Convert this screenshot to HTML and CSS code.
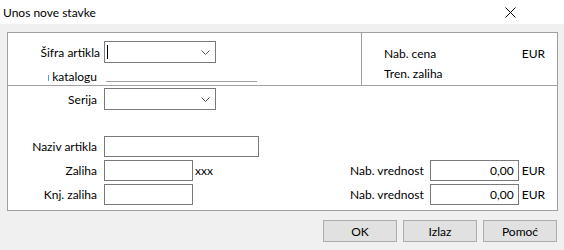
FILE: index.html
```html
<!DOCTYPE html>
<html lang="sr">
<head>
    <meta charset="UTF-8">
    <title>Unos nove stavke</title>
    <link rel="stylesheet" href="styles.css">
</head>
<body>
    <div class="titlebar">
        <span class="title">Unos nove stavke</span>
        <svg class="close" width="11" height="11" viewBox="0 0 11 11">
            <path d="M0.5 0.5 L10.5 10.5 M10.5 0.5 L0.5 10.5" stroke="#000" stroke-width="1" fill="none"/>
        </svg>
    </div>
    <div class="content">
        <div class="frame">
            <div class="top">
                <div class="top-left">
                    <div class="row r-sifra">
                        <label class="lbl lbl-first">Šifra artikla</label>
                        <div class="combo">
                            <span class="caret"></span>
                            <svg class="chev" width="9" height="5" viewBox="0 0 9 5"><polyline points="0.5,0.5 4.5,4.5 8.5,0.5" stroke="#555" fill="none"/></svg>
                        </div>
                    </div>
                    <div class="row r-cat">
                        <div class="clip"><span>Šifra u katalogu</span></div>
                        <div class="cat-line"></div>
                    </div>
                </div>
                <div class="top-right">
                    <div class="info-row"><span>Nab. cena</span><span>EUR</span></div>
                    <div class="info-row"><span>Tren. zaliha</span></div>
                </div>
            </div>
            <div class="bottom">
                <div class="row r-serija">
                    <label class="lbl">Serija</label>
                    <div class="combo">
                        <svg class="chev" width="9" height="5" viewBox="0 0 9 5"><polyline points="0.5,0.5 4.5,4.5 8.5,0.5" stroke="#555" fill="none"/></svg>
                    </div>
                </div>
                <div class="row r-naziv">
                    <label class="lbl">Naziv artikla</label>
                    <input class="field f-wide" type="text">
                </div>
                <div class="row r-qty">
                    <label class="lbl">Zaliha</label>
                    <input class="field f-short" type="text">
                    <span class="unit">xxx</span>
                    <div class="right-group">
                        <label>Nab. vrednost</label>
                        <input class="field f-num" type="text" value="0,00">
                        <span>EUR</span>
                    </div>
                </div>
                <div class="row r-qty">
                    <label class="lbl">Knj. zaliha</label>
                    <input class="field f-short" type="text">
                    <div class="right-group">
                        <label>Nab. vrednost</label>
                        <input class="field f-num" type="text" value="0,00">
                        <span>EUR</span>
                    </div>
                </div>
            </div>
        </div>
        <div class="buttons">
            <button class="btn">OK</button>
            <button class="btn">Izlaz</button>
            <button class="btn">Pomoć</button>
        </div>
    </div>
</body>
</html>
```

FILE: styles.css
```css
body {
    margin: 0;
    width: 564px;
    height: 250px;
    overflow: hidden;
    background-color: #f0f0f0;
    font-family: Lato, "Noto Sans", sans-serif;
    font-size: 12px;
    color: #000;
}
.titlebar {
    height: 24px;
    background-color: #fff;
    display: flex;
    align-items: center;
    justify-content: space-between;
    padding: 0 48px 0 3px;
}
.title {
    font-size: 12px;
}
.close {
    display: block;
}
.content {
    padding: 8px 6px 0 7px;
}
.frame {
    height: 179px;
    box-sizing: border-box;
    border: 1px solid #a0a0a0;
    background-color: #fff;
}
.top {
    display: flex;
    height: 53px;
    box-sizing: border-box;
    border-bottom: 1px solid #a0a0a0;
}
.top-left {
    width: 354px;
    box-sizing: border-box;
    border-right: 1px solid #a0a0a0;
}
.top-right {
    flex: 1;
    padding: 10px 12px 0 22px;
}
.info-row {
    display: flex;
    justify-content: space-between;
    align-items: center;
    height: 20px;
}
.row {
    display: flex;
    align-items: center;
}
.lbl {
    width: 89px;
    margin-right: 7px;
    flex-shrink: 0;
    text-align: right;
    white-space: nowrap;
}
.lbl-first {
    width: 92px;
    margin-right: 4px;
}
.combo {
    width: 112px;
    height: 22px;
    box-sizing: border-box;
    border: 1px solid #7a7a7a;
    background-color: #fff;
    display: flex;
    align-items: center;
    justify-content: flex-end;
    padding-right: 5px;
    position: relative;
}
.chev {
    display: block;
}
.caret {
    position: absolute;
    left: 2px;
    top: 3px;
    width: 1px;
    height: 14px;
    background-color: #000;
}
.r-sifra {
    margin-top: 8px;
    height: 22px;
}
.r-cat {
    margin-top: 6px;
    height: 16px;
    align-items: flex-start;
}
.clip {
    margin-left: 40px;
    width: 49px;
    margin-right: 9px;
    line-height: 16px;
    overflow: hidden;
    display: flex;
    justify-content: flex-end;
    white-space: nowrap;
}
.clip span {
    flex-shrink: 0;
}
.cat-line {
    width: 151px;
    height: 12px;
    border-bottom: 1px solid #a0a0a0;
}
.bottom {
    padding: 2px 12px 0 0;
}
.r-serija {
    height: 22px;
}
.r-naziv {
    margin-top: 26px;
    height: 21px;
}
.r-qty {
    margin-top: 3px;
    height: 21px;
}
.field {
    height: 21px;
    box-sizing: border-box;
    margin: 0;
    padding: 0 4px;
    border: 1px solid #7a7a7a;
    background-color: #fff;
    font-family: inherit;
    font-size: 12px;
    color: #000;
    outline: none;
}
.f-wide {
    width: 155px;
}
.f-short {
    width: 89px;
}
.unit {
    margin-left: 2px;
}
.right-group {
    margin-left: auto;
    display: flex;
    align-items: center;
}
.f-num {
    width: 89px;
    margin: 0 3px 0 6px;
    text-align: right;
}
.buttons {
    display: flex;
    justify-content: flex-end;
    gap: 6px;
    padding: 9px 1px 0 0;
}
.btn {
    width: 74px;
    height: 22px;
    padding: 0;
    background-color: #e1e1e1;
    border: 1px solid #adadad;
    font-family: inherit;
    font-size: 12px;
    color: #000;
}
```
